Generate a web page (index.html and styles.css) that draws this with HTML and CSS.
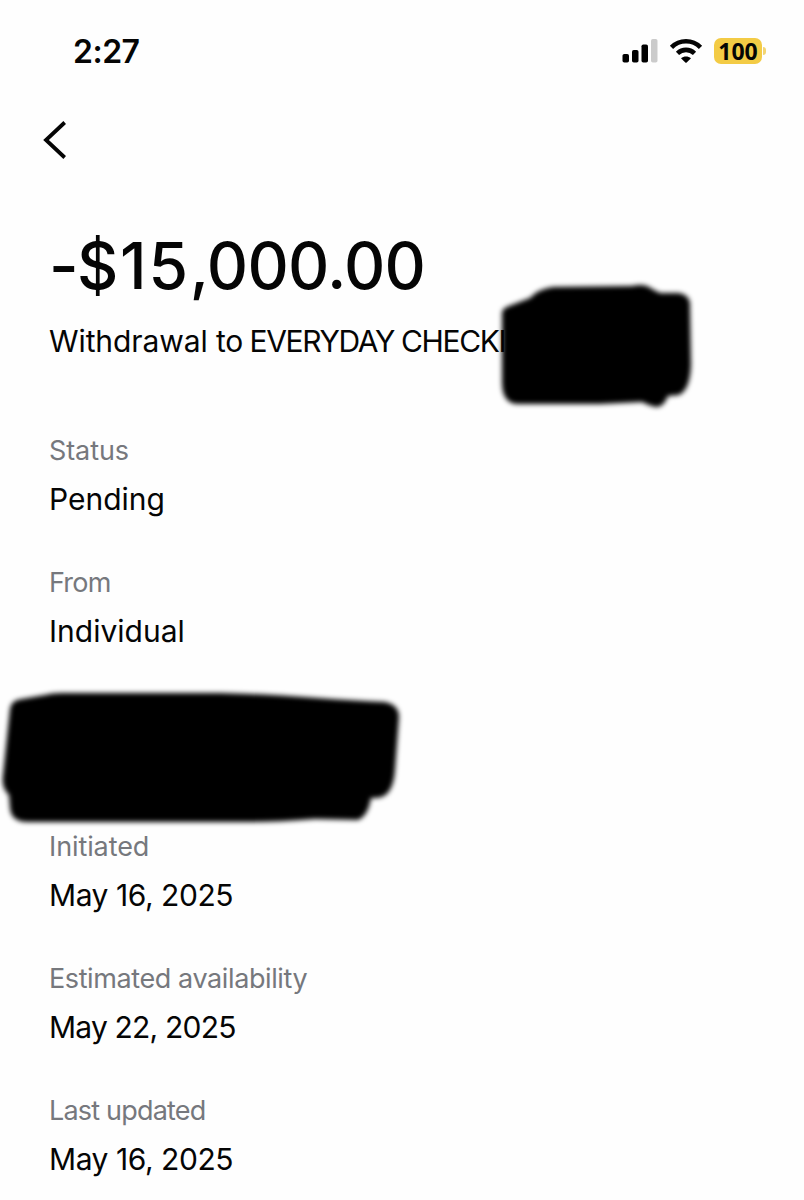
FILE: index.html
```
<!DOCTYPE html>
<html lang="en">
<head>
  <meta charset="UTF-8">
  <meta name="viewport" content="width=device-width, initial-scale=1.0">
  <title>Transfer Details</title>
  <link rel="stylesheet" href="styles.css">
</head>
<body>
  <header class="status-bar">
    <span class="time">2:27</span>
    <div class="indicators">
      <svg class="signal" width="36" height="24" viewBox="0 0 36 24">
        <rect x="0.500" y="15" width="6.500" height="8.500" rx="1.800"/>
        <rect x="10" y="11" width="6.500" height="12.500" rx="1.800"/>
        <rect x="19.500" y="5.500" width="6.500" height="18" rx="1.800"/>
        <rect class="off" x="29" y="0" width="6.500" height="23.500" rx="1.800"/>
      </svg>
      <svg class="wifi" width="34" height="26" viewBox="0 0 34 26">
        <path class="arc" d="M2.500 9.300C10.500 1.200 23.500 1.200 31.500 9.300"/>
        <path class="arc" d="M8.500 15.300C13.300 10.700 20.700 10.700 25.500 15.300"/>
        <path d="M12 20.200C14.800 17.800 19.200 17.800 22 20.200L17.700 24.500Q17 25.100 16.300 24.500Z"/>
      </svg>
      <div class="battery">
        <span class="level">100</span>
        <span class="cap"></span>
      </div>
    </div>
  </header>

  <nav class="top-nav">
    <a href="#" aria-label="Back">
      <svg width="24" height="38" viewBox="0 0 24 38">
        <path class="chevron" d="M21.700 1.500L3 19L21.700 36.500"/>
      </svg>
    </a>
  </nav>

  <main class="details">
    <h1 class="amount"><span class="minus">-</span><span class="dollars">$15</span>,000.00</h1>
    <div class="description">
      <p>Withdrawal to <span class="account">EVERYDAY CHECKI</span></p>
      <svg class="marker marker-account" width="210" height="140" viewBox="490 275 210 140">
        <path class="soft" d="M502 312Q503 308 509 306L530 298Q538 289 553 287L632 286Q645 283 652 289L660 293L679 293Q691 295 690 307L691 365Q690 390 679 395L668 396Q663 408 656 407Q650 406 642 402L600 404L520 404Q502 405 502 382Z"/>
      </svg>
    </div>

    <dl class="fields">
      <div class="field">
        <dt>Status</dt>
        <dd>Pending</dd>
      </div>
      <div class="field">
        <dt class="tight">From</dt>
        <dd>Individual</dd>
      </div>
      <div class="field">
        <svg class="marker marker-field" width="420" height="150" viewBox="-5 680 420 150">
          <path class="soft" d="M10 709Q11 700 22 699L45 695Q52 693 62 693L205 693C270 693 330 700 385 702Q399 705 399 717L395 770Q393 798 376 798L371 798Q368 816 358 820L315 819Q280 822 250 822L28 822Q11 822 10 808L9 795Q1 788 3 775Z"/>
        </svg>
      </div>
      <div class="field">
        <dt>Initiated</dt>
        <dd class="date">May 16, 2025</dd>
      </div>
      <div class="field">
        <dt class="long">Estimated availability</dt>
        <dd class="date date-available">May 22, 2025</dd>
      </div>
      <div class="field">
        <dt class="tight">Last updated</dt>
        <dd class="date">May 16, 2025</dd>
      </div>
    </dl>
  </main>
</body>
</html>
```

FILE: styles.css
```
* {
  box-sizing: border-box;
}
body {
  margin: 0;
  height: 1200px;
  overflow: hidden;
  background-color: #fefefe;
  color: #050505;
  font-family: Inter, "Liberation Sans", sans-serif;
}
h1, p, dl, dd {
  margin: 0;
}
svg {
  display: block;
}
.status-bar {
  display: flex;
  justify-content: space-between;
  align-items: center;
  height: 102px;
  padding: 0 38px 0 73px;
}
.time {
  padding-top: 2px;
  font-size: 32px;
  font-weight: 600;
  line-height: 40px;
  letter-spacing: -0.5px;
}
.indicators {
  display: flex;
  align-items: center;
}
.signal {
  margin-right: 11px;
}
.signal .off {
  fill: #cbcbcb;
}
.wifi {
  margin-right: 11px;
}
.wifi .arc {
  fill: none;
  stroke: #050505;
  stroke-width: 4.6;
}
.battery {
  display: flex;
  align-items: center;
  gap: 1px;
}
.level {
  width: 48px;
  height: 26px;
  border-radius: 7px;
  background-color: #f3cb45;
  font-family: "Noto Sans", "Open Sans", sans-serif;
  font-size: 23px;
  font-weight: 700;
  line-height: 26px;
  text-align: center;
}
.cap {
  width: 3px;
  height: 8px;
  border-radius: 0 4px 4px 0;
  background-color: #f3d573;
}
.top-nav {
  height: 124px;
  padding: 19px 0 0 43px;
}
.top-nav a {
  display: inline-block;
}
.chevron {
  fill: none;
  stroke: #050505;
  stroke-width: 3.8;
}
.details {
  padding: 0 49px;
}
.amount {
  margin-bottom: 13px;
  font-size: 64px;
  font-weight: 500;
  line-height: 80px;
  letter-spacing: -0.7px;
}
.minus {
  margin-right: -1px;
}
.dollars {
  letter-spacing: 1.8px;
}
.description {
  position: relative;
  margin-bottom: 70px;
  font-size: 30px;
  line-height: 44px;
  letter-spacing: -0.1px;
  white-space: nowrap;
}
.account {
  margin-left: -2px;
  letter-spacing: -1.35px;
}
/* marker strokes lie over the account details */
.marker {
  position: absolute;
}
.marker-account {
  top: -44px;
  left: 441px;
}
.marker-field {
  top: -17px;
  left: -54px;
}
.soft {
  fill: #000;
  filter: blur(2.7px);
}
.fields {
  display: flex;
  flex-direction: column;
  gap: 44px;
}
.field {
  position: relative;
  display: flex;
  flex-direction: column;
  gap: 8px;
  height: 88px;
}
dt {
  color: #76787d;
  font-size: 27px;
  font-weight: 400;
  line-height: 36px;
  letter-spacing: -0.1px;
}
dt.long {
  letter-spacing: -0.4px;
}
dt.tight {
  letter-spacing: -0.8px;
}
dd {
  font-size: 30px;
  line-height: 44px;
}
.date {
  letter-spacing: -0.45px;
}
.date-available {
  letter-spacing: -0.8px;
}
```
